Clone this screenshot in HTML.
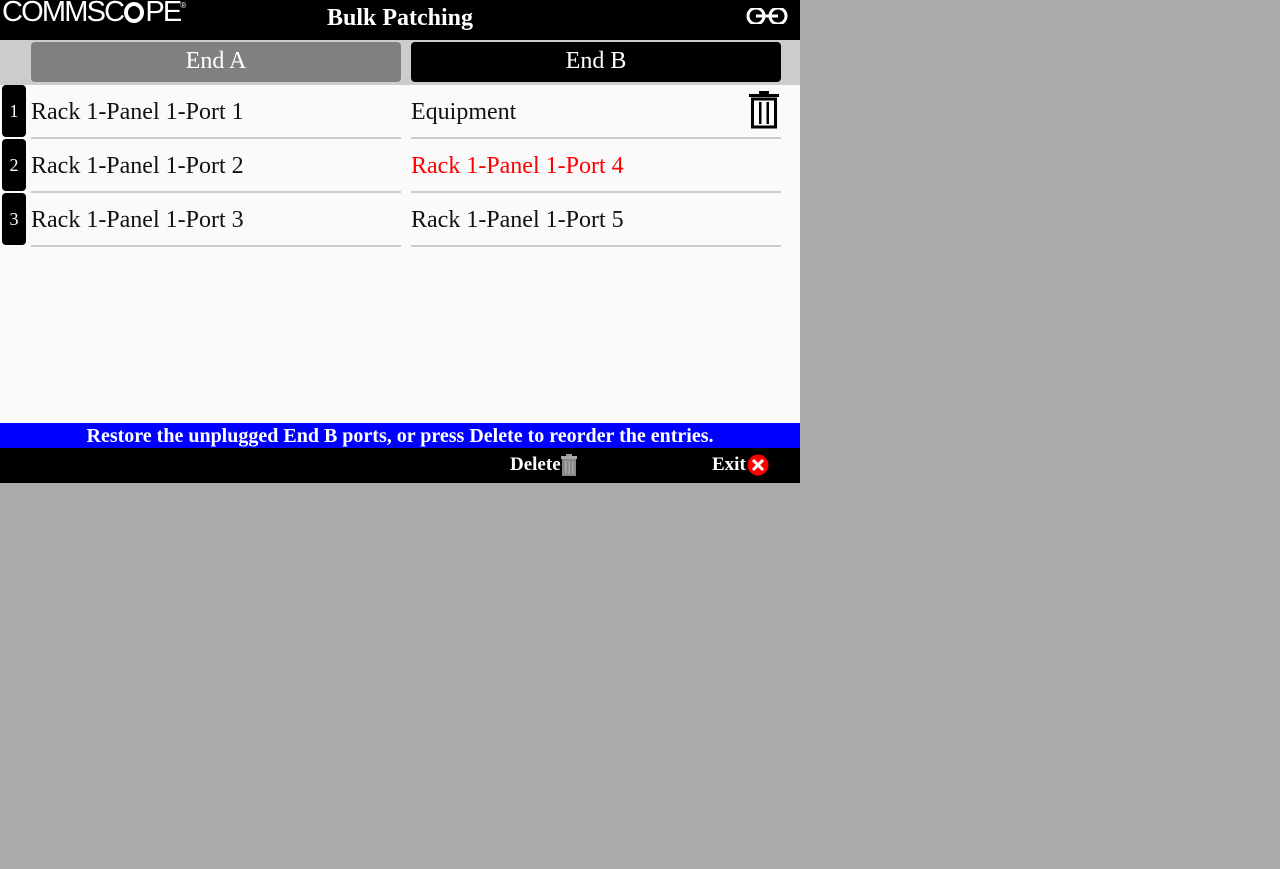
<!DOCTYPE html>
<html><head><meta charset="utf-8"><style>
html,body{margin:0;padding:0;width:1280px;height:869px;background:#aaaaaa;overflow:hidden}
*{box-sizing:border-box}
#app{position:absolute;left:0;top:0;width:800px;height:483px;background:#fafafa;font-family:"Liberation Serif",serif}
#hdr{position:absolute;left:0;top:0;width:800px;height:40px;background:#000}
#logo{position:absolute;left:2px;top:-4px;color:#fff;font-family:"Liberation Sans",sans-serif;font-size:29px;letter-spacing:-1.8px;white-space:nowrap}
#title{position:absolute;left:0;width:800px;top:5px;text-align:center;color:#fff;font-weight:bold;font-size:24px}
#tabs{position:absolute;left:0;top:40px;width:800px;height:45px;background:#cccccc}
.tab{position:absolute;top:2px;height:40px;width:370px;border-radius:4px;color:#fff;font-size:24px;text-align:center;line-height:38px}
.row{position:absolute;left:0;width:800px;height:54px}
.num{position:absolute;left:2px;top:0;width:24px;height:52px;background:#000;border-radius:4px;color:#fff;font-size:18px;text-align:center;line-height:52px}
.cell{position:absolute;top:0;height:54px;width:370px;border-bottom:2px solid #cccccc;font-size:24px;line-height:54px;color:#111}
#msg{position:absolute;left:0;top:423px;width:800px;height:25px;background:#0000ff;color:#fff;font-weight:bold;font-size:20px;text-align:center;line-height:26px}
#foot{position:absolute;left:0;top:448px;width:800px;height:35px;background:#000;color:#fff;font-weight:bold;font-size:19px}
</style></head><body><div id="app">
<div id="hdr">
<div id="logo">COMMSC<span style="display:inline-block;width:20px;height:21px;border:4px solid #fff;border-radius:50%;vertical-align:-2px;margin:0 1px"></span>PE<sup style="font-size:8px;vertical-align:13px">®</sup></div>
<div id="title">Bulk Patching</div>
<svg style="position:absolute;left:744px;top:8px" width="46" height="16" viewBox="0 0 46 16"><circle cx="12" cy="8" r="8" fill="none" stroke="#fff" stroke-width="3"/><circle cx="34" cy="8" r="8" fill="none" stroke="#fff" stroke-width="3"/><line x1="12" y1="8" x2="34" y2="8" stroke="#fff" stroke-width="3"/></svg>
</div>
<div id="tabs"><div class="tab" style="left:31px;background:#808080">End A</div><div class="tab" style="left:411px;background:#000">End B</div></div>
<div class="row" style="top:85px"><div class="num">1</div><div class="cell" style="left:31px">Rack 1-Panel 1-Port 1</div><div class="cell" style="left:411px">Equipment</div>
<svg style="position:absolute;left:748px;top:6px" width="32" height="38" viewBox="0 0 32 38"><rect x="1" y="3" width="30" height="3" fill="#000"/><rect x="11" y="0" width="10" height="4" fill="#000"/><rect x="4.5" y="8" width="23" height="28" fill="none" stroke="#000" stroke-width="3"/><rect x="11" y="11" width="2.5" height="22" fill="#000"/><rect x="18.5" y="11" width="2.5" height="22" fill="#000"/></svg></div>
<div class="row" style="top:139px"><div class="num">2</div><div class="cell" style="left:31px">Rack 1-Panel 1-Port 2</div><div class="cell" style="left:411px;color:#ff0000">Rack 1-Panel 1-Port 4</div></div>
<div class="row" style="top:193px"><div class="num">3</div><div class="cell" style="left:31px">Rack 1-Panel 1-Port 3</div><div class="cell" style="left:411px">Rack 1-Panel 1-Port 5</div></div>
<div id="msg">Restore the unplugged End B ports, or press Delete to reorder the entries.</div>
<div id="foot">
<span style="position:absolute;left:510px;top:6px">Delete</span>
<svg style="position:absolute;left:561px;top:6px" width="16" height="22" viewBox="0 0 16 22"><rect x="5" y="0" width="6" height="3" fill="#999"/><rect x="0" y="2" width="16" height="3" fill="#aaa"/><rect x="1" y="5" width="14" height="17" fill="#888"/><rect x="4" y="7" width="1.5" height="13" fill="#aaa"/><rect x="7.5" y="7" width="1.5" height="13" fill="#aaa"/><rect x="11" y="7" width="1.5" height="13" fill="#aaa"/></svg>
<span style="position:absolute;left:712px;top:6px">Exit</span>
<svg style="position:absolute;left:747px;top:6px" width="22" height="22" viewBox="0 0 22 22"><circle cx="11" cy="11" r="10.5" fill="#ff0000"/><path d="M6 6L16 16M16 6L6 16" stroke="#fff" stroke-width="3"/></svg>
</div>
</div></body></html>
